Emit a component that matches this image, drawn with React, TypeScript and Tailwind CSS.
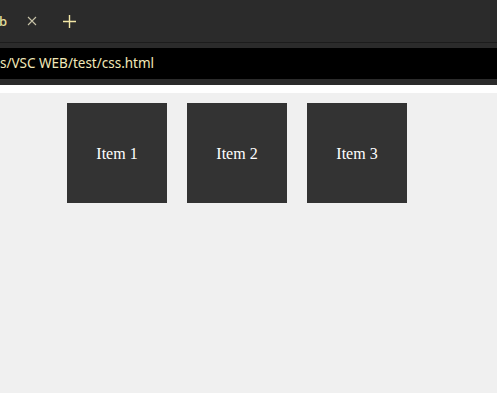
const items = ["Item 1", "Item 2", "Item 3"];

export default function App() {
  return (
    <div className="w-[497px] h-[404px] bg-white flex flex-col overflow-hidden">
      {/* tab strip */}
      <div className="h-[42px] bg-[#2b2b2b] flex items-center shrink-0">
        <span className="ml-[-1px] text-[13px] font-semibold font-['Open_Sans',sans-serif] text-[#e2dc98] leading-none">
          b
        </span>
        <svg className="ml-[20px]" width="10" height="10" viewBox="0 0 10 10" aria-hidden>
          <path d="M1 1 9 9M9 1 1 9" stroke="#c8c3a8" strokeWidth="1.1" fill="none" />
        </svg>
        <svg className="ml-[26px]" width="13" height="13" viewBox="0 0 13 13" aria-hidden>
          <path d="M6.5 0v13M0 6.5h13" stroke="#f3e7a6" strokeWidth="1.4" fill="none" />
        </svg>
      </div>
      <div className="h-px bg-[#1c1c1c] shrink-0" />
      <div className="h-[5px] bg-[#2b2b2b] shrink-0" />

      {/* address bar */}
      <div className="h-[31px] bg-black flex items-center shrink-0">
        <span className="text-[13.5px] font-['Noto_Sans',sans-serif] text-[#f2e8b8] leading-none whitespace-nowrap">
          s/VSC WEB/test/css.html
        </span>
      </div>
      <div className="h-[6px] bg-[#2b2b2b] shrink-0" />
      <div className="h-[8px] bg-white shrink-0" />

      {/* page */}
      <div className="h-[300px] bg-[#f0f0f0] shrink-0 flex gap-[20px] pl-[67px] pt-[10px]">
        {items.map((item) => (
          <div
            key={item}
            className="w-[100px] h-[100px] bg-[#333333] text-white flex items-center justify-center pt-[2px] text-[16px] font-['Liberation_Serif',serif]"
          >
            {item}
          </div>
        ))}
      </div>
    </div>
  );
}
